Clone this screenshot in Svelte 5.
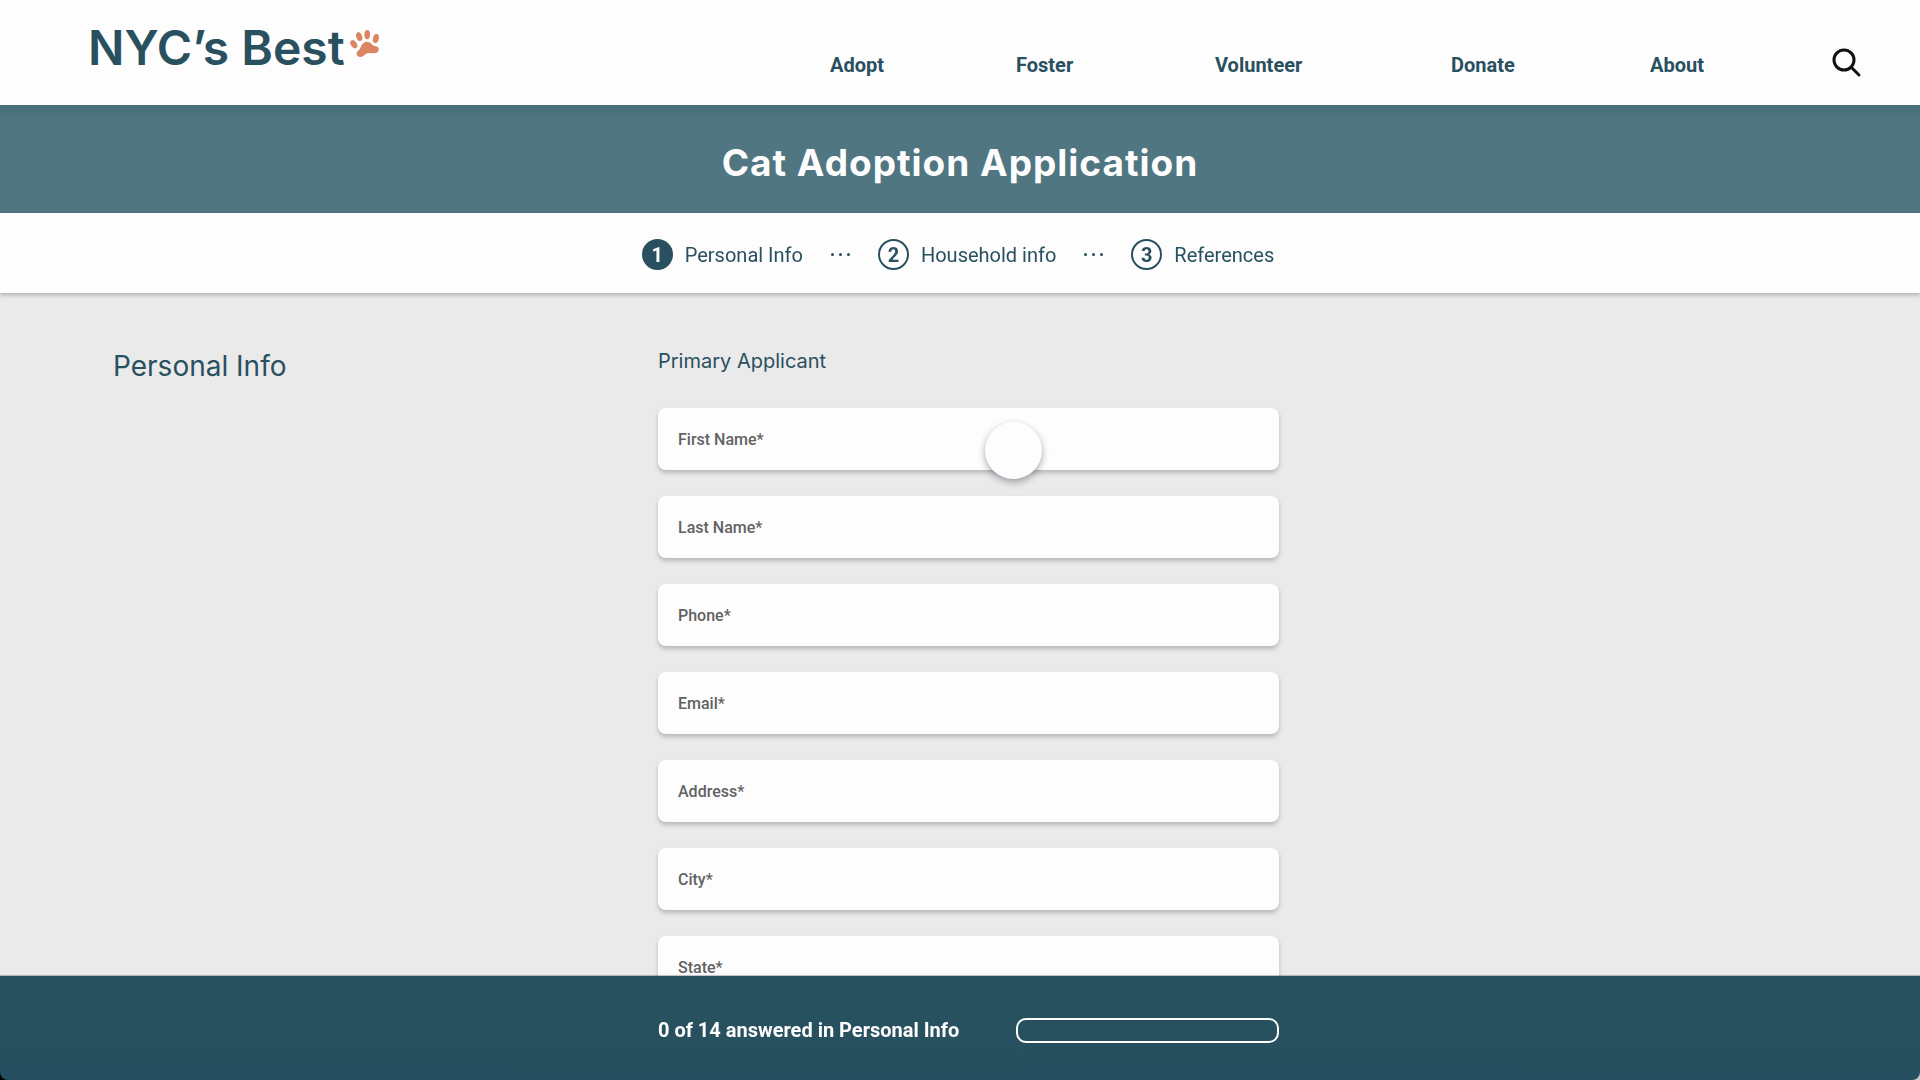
<script>
  const links = ['Adopt', 'Foster', 'Volunteer', 'Donate', 'About'];
  const steps = ['Personal Info', 'Household info', 'References'];
  const fields = [
    { id: 'first-name', label: 'First Name*', type: 'text' },
    { id: 'last-name', label: 'Last Name*', type: 'text' },
    { id: 'phone', label: 'Phone*', type: 'tel' },
    { id: 'email', label: 'Email*', type: 'email' },
    { id: 'address', label: 'Address*', type: 'text' },
    { id: 'city', label: 'City*', type: 'text' },
    { id: 'state', label: 'State*', type: 'text' }
  ];
  const total = 14;
  let values = $state(fields.map(() => ''));
  let answered = $derived(values.filter((v) => v.trim() !== '').length);
</script>

<div class="page">
  <header class="top">
    <a class="brand" href="#home">
      <span>NYC’s Best</span>
      <svg class="paw" viewBox="0 0 30 28" aria-hidden="true">
        <g fill="#da8462">
          <ellipse cx="3.8" cy="14.2" rx="2.9" ry="4.5" transform="rotate(-34 3.8 14.2)" />
          <ellipse cx="9.2" cy="6.600" rx="2.9" ry="4.500" transform="rotate(-18 9.2 6.6)" />
          <ellipse cx="17.2" cy="4.700" rx="2.800" ry="4.600" transform="rotate(2 17.2 4.7)" />
          <ellipse cx="25.8" cy="8.500" rx="2.900" ry="4.600" transform="rotate(14 25.8 8.5)" />
          <path d="M15 12.200c2.700-1 5.400.3 7 2.300 1.500 1.700 3.300 1.600 5 2 2.600.8 2.400 5.300-.4 6.300-3 1-6-.5-9 .4-2.700.8-4 3-6.600 3.700-3 .7-5.200-2-4.100-4.600.7-1.600 2.500-2.200 3.300-4 .9-2.300 2-5 4.800-6.100z" />
        </g>
      </svg>
    </a>
    <nav class="nav" aria-label="Main">
      {#each links as link}
        <a href="#{link.toLowerCase()}">{link}</a>
      {/each}
      <button class="search" type="button" aria-label="Search">
        <svg viewBox="0 0 30 30" aria-hidden="true">
          <circle cx="12" cy="12" r="10" fill="none" stroke="#111" stroke-width="3" />
          <path d="M19 19l8 8" fill="none" stroke="#111" stroke-width="3" stroke-linecap="round" />
        </svg>
      </button>
    </nav>
  </header>

  <div class="hero"><h1>Cat Adoption Application</h1></div>

  <ol class="steps">
    {#each steps as step, i}
      {#if i > 0}
        <li class="dots" aria-hidden="true"><i></i><i></i><i></i></li>
      {/if}
      <li class="step" class:current={i === 0}>
        <span class="num">{i + 1}</span>
        <span>{step}</span>
      </li>
    {/each}
  </ol>

  <main class="columns">
    <h2>Personal Info</h2>
    <form>
      <h3>Primary Applicant</h3>
      {#each fields as field, i}
        <div class="field">
          <label for={field.id}>{field.label}</label>
          <input id={field.id} type={field.type} bind:value={values[i]} />
          {#if i === 0}<span class="pointer" aria-hidden="true"></span>{/if}
        </div>
      {/each}
    </form>
  </main>

  <footer class="columns">
    <div class="status">
      <p>{answered} of {total} answered in Personal Info</p>
      <div class="bar" role="progressbar" aria-label="Answered" aria-valuenow={answered} aria-valuemin="0" aria-valuemax={total}>
        <div class="fill" style="width: {(answered / total) * 100}%"></div>
      </div>
    </div>
  </footer>
</div>

<style>
  :global(body) {
    margin: 0;
    background: linear-gradient(to right, #000 50%, #c4cdd2 50%);
  }
  .page, .page * { box-sizing: border-box; }
  .page {
    height: 100vh;
    display: flex;
    flex-direction: column;
    font-family: Roboto, "Liberation Sans", sans-serif;
    color: #29505f;
  }
  h1, h2, h3, p, ol { margin: 0; padding: 0; font-weight: 400; }

  .top {
    flex: none;
    display: grid;
    grid-template-columns: 830fr 1090fr;
    height: 105px;
    background: #fdfdfd;
  }
  .brand {
    display: flex;
    align-items: flex-start;
    gap: 5px;
    padding: 18px 0 0 88px;
    color: #29505f;
    font: 600 48px/60px Inter, sans-serif;
    text-decoration: none;
    white-space: nowrap;
  }
  .paw { width: 30px; height: 28px; margin-top: 12px; }
  .nav {
    display: grid;
    grid-template-columns: 186fr 199fr 236fr 199fr 182fr 88fr;
    align-items: center;
    justify-items: start;
    padding-top: 24px;
  }
  .nav a {
    color: #29505f;
    font-size: 20px;
    font-weight: 700;
    text-decoration: none;
  }
  .search {
    display: flex;
    padding: 0 0 4px;
    border: 0;
    background: none;
    cursor: pointer;
  }
  .search svg { width: 30px; height: 30px; }

  .hero {
    flex: none;
    display: flex;
    align-items: center;
    justify-content: center;
    height: 108px;
    padding-top: 8px;
    background: linear-gradient(#47707b, #4f7681 16px);
  }
  h1 {
    color: #fdfdfd;
    font: 700 37px/48px Inter, sans-serif;
    letter-spacing: 1px;
  }

  .steps {
    flex: none;
    position: relative;
    display: flex;
    align-items: center;
    justify-content: center;
    gap: 27px;
    height: 80px;
    padding: 3px 4px 0 0;
    background: #fdfdfd;
    box-shadow: 0 2px 4px rgba(40, 40, 60, 0.3);
    list-style: none;
    font-size: 20px;
  }
  .step { display: flex; align-items: center; gap: 12px; }
  .num {
    display: flex;
    align-items: center;
    justify-content: center;
    width: 31px;
    height: 31px;
    border: 2px solid #29505f;
    border-radius: 50%;
    font-weight: 700;
  }
  .current .num { background: #29505f; color: #fdfdfd; }
  .dots { display: flex; gap: 5px; padding: 0 1px; }
  .dots i { width: 3px; height: 3px; border-radius: 50%; background: #29505f; }

  .columns {
    display: grid;
    grid-template-columns: 658fr 621fr 641fr;
  }
  main {
    flex: 1;
    min-height: 0;
    overflow: auto;
    scrollbar-width: none;
    background: #eaeaea;
  }
  h2 {
    padding: 54px 0 0 113px;
    font: 400 28px/38px Inter, sans-serif;
  }
  form { display: flex; flex-direction: column; gap: 26px; padding: 54px 0 26px; }
  h3 {
    margin-bottom: 6px;
    font: 400 20px/29px Inter, sans-serif;
  }
  .field {
    position: relative;
    display: flex;
    align-items: center;
    gap: 12px;
    height: 62px;
    padding: 0 20px;
    border-radius: 8px;
    background: #fdfdfd;
    box-shadow: 0 3px 4px rgba(40, 40, 60, 0.25);
    color: #626262;
    font-size: 16px;
  }
  label { font-weight: 500; }
  input {
    flex: 1;
    min-width: 0;
    align-self: stretch;
    padding: 0;
    border: 0;
    outline: 0;
    background: none;
    color: #29505f;
    font: inherit;
  }
  .pointer {
    position: absolute;
    top: 14px;
    left: 327px;
    width: 57px;
    height: 57px;
    border-radius: 50%;
    background: #fdfdfd;
    box-shadow: 0 3px 7px rgba(40, 40, 60, 0.4);
    z-index: 1;
    pointer-events: none;
  }

  footer {
    flex: none;
    position: relative;
    height: 104px;
    border-radius: 0 0 8px 8px;
    background: linear-gradient(#28515f 0%, #28515f 60%, #244e5e 100%);
    box-shadow: 0 -1px 1px rgba(40, 40, 60, 0.3);
  }
  .status {
    grid-column: 2;
    display: flex;
    align-items: center;
    justify-content: space-between;
    gap: 24px;
    padding-top: 4px;
  }
  .status p {
    color: #fdfdfd;
    font-size: 20px;
    font-weight: 700;
    line-height: 28px;
  }
  .bar {
    flex: 0 1 263px;
    height: 25px;
    border: 2px solid #fdfdfd;
    border-radius: 10px;
    overflow: hidden;
  }
  .fill { height: 100%; background: #fdfdfd; }
</style>
